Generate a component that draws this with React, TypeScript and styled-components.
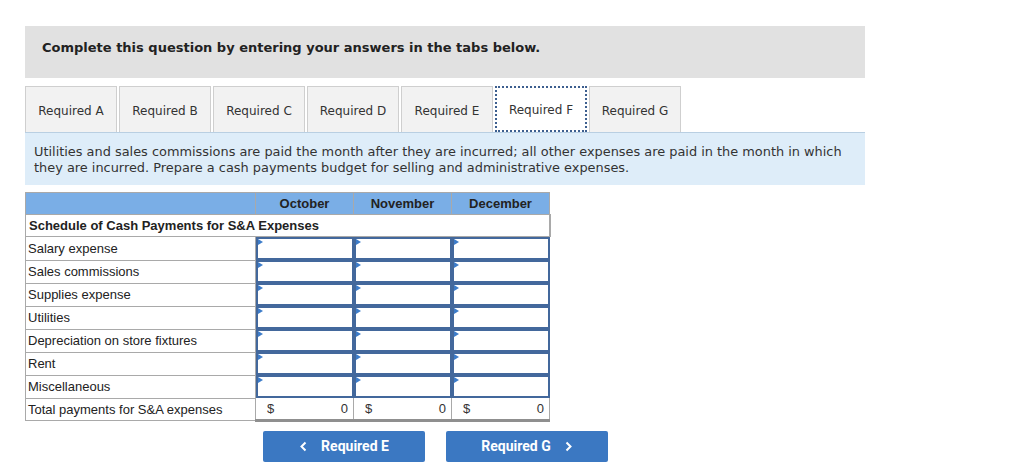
import React from 'react';
import styled, { createGlobalStyle } from 'styled-components';

const GlobalStyle = createGlobalStyle`
  body {
    margin: 0;
    background: #fff;
  }
`;

const Page = styled.div`
  width: 840px;
  padding: 26px 0 0 25px;
  font-family: "DejaVu Sans", Verdana, sans-serif;
  color: #222;
`;

const Banner = styled.div`
  height: 52px;
  box-sizing: border-box;
  background: #e1e1e1;
  padding: 14px 0 0 17px;
  font-size: 13px;
  font-weight: 700;
  color: #222;
`;

const TabBar = styled.div`
  display: flex;
  gap: 2px;
  margin-top: 8px;
`;

const Tab = styled.div<{ $active?: boolean }>`
  width: 92px;
  height: 46px;
  box-sizing: border-box;
  display: flex;
  align-items: center;
  justify-content: center;
  padding-top: 2px;
  font-size: 12px;
  color: #333;
  background: ${(p) => (p.$active ? '#fff' : '#f2f2f2')};
  border: ${(p) => (p.$active ? '2px dotted #3d5f8f' : '1px solid #cfcfcf')};
  border-bottom: ${(p) => (p.$active ? '2px dotted #3d5f8f' : 'none')};
`;

const Info = styled.div`
  background: #deedf9;
  border-top: 1px solid #b9cfe2;
  padding: 11px 14px 9px 9px;
  font-size: 12.9px;
  line-height: 16px;
  color: #333;
`;

const Table = styled.table`
  margin-top: 7px;
  border-collapse: collapse;
  font-family: "Liberation Sans", Arial, sans-serif;
  font-size: 13px;
  color: #222;
`;

const HeadCell = styled.th<{ $w: number }>`
  width: ${(p) => p.$w}px;
  height: 21px;
  padding: 0;
  background: #7aaee6;
  border: 1px solid #a9a9a9;
  font-weight: 700;
  font-size: 13px;
  color: #222;
  text-align: center;
`;

const TitleCell = styled.td`
  height: 21px;
  padding: 0 3px;
  font-weight: 700;
  font-size: 13px;
  border: 1px solid #a9a9a9;
  border-right: 2px solid #a9a9a9;
`;

const Label = styled.td`
  height: 21px;
  padding: 0 2px;
  border: 1px solid #a9a9a9;
`;

const InputCell = styled.td`
  padding: 0;
  border: none;
`;

const InputBox = styled.div`
  position: relative;
  height: 19px;
  border: 2px solid #43689c;
  background: #fff;

  &::before {
    content: '';
    position: absolute;
    left: 0;
    top: 0;
    border-left: 5px solid #3d7cc9;
    border-top: 3px solid transparent;
    border-bottom: 3px solid transparent;
  }
`;

const TotalCell = styled.td`
  height: 19px;
  padding: 0 5px 0 11px;
  border-left: 1px solid #a9a9a9;
  border-right: 1px solid #a9a9a9;
  border-bottom: 3px solid #8f8f8f;
  color: #333;
`;

const TotalInner = styled.div`
  display: flex;
  justify-content: space-between;
`;

const NavRow = styled.div`
  display: flex;
  gap: 21px;
  margin: 9px 0 0 238px;
`;

const NavButton = styled.div`
  width: 162px;
  height: 31px;
  background: #3b78c2;
  border-radius: 2px;
  color: #fff;
  font-family: Roboto, "Liberation Sans", sans-serif;
  font-weight: 700;
  font-size: 14px;
  display: flex;
  align-items: center;
  justify-content: center;
  gap: 13px;
`;

const Chevron = styled.svg`
  width: 9px;
  height: 11px;
`;

const tabs = ['A', 'B', 'C', 'D', 'E', 'F', 'G'];
const rows = [
  'Salary expense',
  'Sales commissions',
  'Supplies expense',
  'Utilities',
  'Depreciation on store fixtures',
  'Rent',
  'Miscellaneous',
];
const months = ['October', 'November', 'December'];

const Left = () => (
  <Chevron viewBox="0 0 9 11">
    <path d="M6.5 1.5 L2.5 5.5 L6.5 9.5" stroke="#fff" strokeWidth="2" fill="none" />
  </Chevron>
);

const Right = () => (
  <Chevron viewBox="0 0 9 11">
    <path d="M2.5 1.5 L6.5 5.5 L2.5 9.5" stroke="#fff" strokeWidth="2" fill="none" />
  </Chevron>
);

export default function App() {
  return (
    <>
      <GlobalStyle />
      <Page>
        <Banner>Complete this question by entering your answers in the tabs below.</Banner>
        <TabBar>
          {tabs.map((t) => (
            <Tab key={t} $active={t === 'F'}>
              Required {t}
            </Tab>
          ))}
        </TabBar>
        <Info>
          Utilities and sales commissions are paid the month after they are incurred; all other
          expenses are paid in the month in which they are incurred. Prepare a cash payments budget
          for selling and administrative expenses.
        </Info>
        <Table>
          <thead>
            <tr>
              <HeadCell $w={229} />
              {months.map((m) => (
                <HeadCell key={m} $w={97}>
                  {m}
                </HeadCell>
              ))}
            </tr>
          </thead>
          <tbody>
            <tr>
              <TitleCell colSpan={4}>Schedule of Cash Payments for S&amp;A Expenses</TitleCell>
            </tr>
            {rows.map((r) => (
              <tr key={r}>
                <Label>{r}</Label>
                {months.map((m) => (
                  <InputCell key={m}>
                    <InputBox />
                  </InputCell>
                ))}
              </tr>
            ))}
            <tr>
              <Label>Total payments for S&amp;A expenses</Label>
              {months.map((m) => (
                <TotalCell key={m}>
                  <TotalInner>
                    <span>$</span>
                    <span>0</span>
                  </TotalInner>
                </TotalCell>
              ))}
            </tr>
          </tbody>
        </Table>
        <NavRow>
          <NavButton>
            <Left />
            Required E
          </NavButton>
          <NavButton>
            Required G
            <Right />
          </NavButton>
        </NavRow>
      </Page>
    </>
  );
}
